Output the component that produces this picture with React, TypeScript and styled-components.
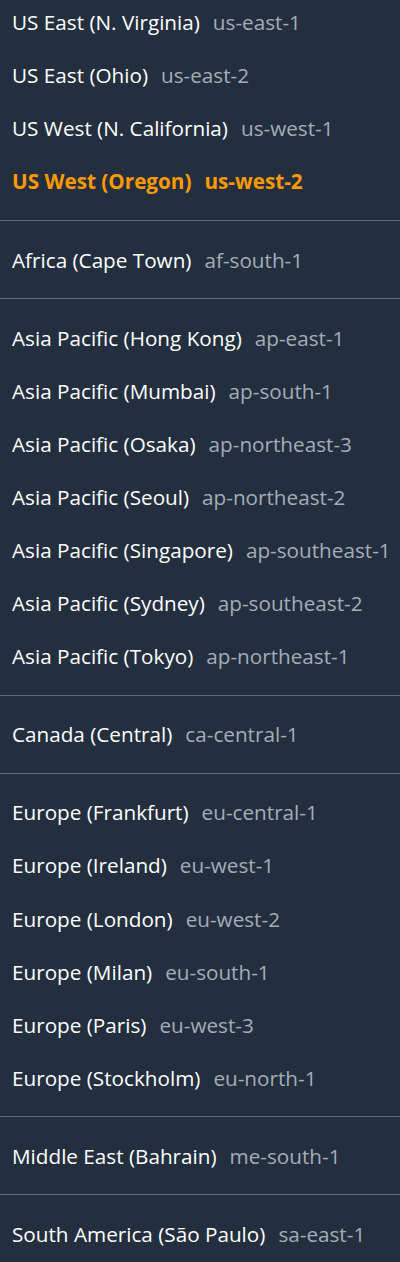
import * as React from "react";
import styled, { createGlobalStyle } from "styled-components";

interface IRegion {
  name: string;
  code: string;
}

const regionGroups: IRegion[][] = [
  [
    { name: "US East (N. Virginia)", code: "us-east-1" },
    { name: "US East (Ohio)", code: "us-east-2" },
    { name: "US West (N. California)", code: "us-west-1" },
    { name: "US West (Oregon)", code: "us-west-2" },
  ],
  [{ name: "Africa (Cape Town)", code: "af-south-1" }],
  [
    { name: "Asia Pacific (Hong Kong)", code: "ap-east-1" },
    { name: "Asia Pacific (Mumbai)", code: "ap-south-1" },
    { name: "Asia Pacific (Osaka)", code: "ap-northeast-3" },
    { name: "Asia Pacific (Seoul)", code: "ap-northeast-2" },
    { name: "Asia Pacific (Singapore)", code: "ap-southeast-1" },
    { name: "Asia Pacific (Sydney)", code: "ap-southeast-2" },
    { name: "Asia Pacific (Tokyo)", code: "ap-northeast-1" },
  ],
  [{ name: "Canada (Central)", code: "ca-central-1" }],
  [
    { name: "Europe (Frankfurt)", code: "eu-central-1" },
    { name: "Europe (Ireland)", code: "eu-west-1" },
    { name: "Europe (London)", code: "eu-west-2" },
    { name: "Europe (Milan)", code: "eu-south-1" },
    { name: "Europe (Paris)", code: "eu-west-3" },
    { name: "Europe (Stockholm)", code: "eu-north-1" },
  ],
  [{ name: "Middle East (Bahrain)", code: "me-south-1" }],
  [{ name: "South America (São Paulo)", code: "sa-east-1" }],
];

const selectedCode = "us-west-2";

export default function App() {
  return (
    <>
      <GlobalStyle />
      <Menu>
        <List>
          {regionGroups.map((group, index) => (
            <Group key={index}>
              {group.map((region) => {
                const active = region.code === selectedCode;
                return (
                  <Row key={region.code} $active={active}>
                    <RegionName>{region.name}</RegionName>
                    <RegionCode $active={active}>{region.code}</RegionCode>
                  </Row>
                );
              })}
            </Group>
          ))}
        </List>
      </Menu>
    </>
  );
}

const GlobalStyle = createGlobalStyle`
  html, body {
    margin: 0;
    padding: 0;
    background: #232f3e;
  }
  body {
    font-family: "Open Sans", "Liberation Sans", sans-serif;
  }
`;

const Menu = styled.div`
  width: 400px;
  height: 1262px;
  overflow: hidden;
  background: #232f3e;
`;

// the menu is scrolled a little, so the first group starts above the top edge
const List = styled.ul`
  list-style: none;
  margin: -16.4px 0 0;
  padding: 0;
`;

const Group = styled.li`
  display: flex;
  flex-direction: column;
  padding: 12px 0;
  border-bottom: 1px solid #5f6b7a;
  &:last-child {
    border-bottom: 0;
  }
`;

const Row = styled.div<{ $active?: boolean }>`
  display: flex;
  align-items: center;
  gap: 13px;
  height: 53.1px;
  padding: 0 12px;
  font-size: 20.7px;
  white-space: nowrap;
  color: ${(p) => (p.$active ? "#ff9900" : "#ffffff")};
  font-weight: ${(p) => (p.$active ? 700 : 500)};
`;

const RegionName = styled.span``;

const RegionCode = styled.span<{ $active?: boolean }>`
  color: ${(p) => (p.$active ? "#ff9900" : "#a3adb8")};
`;
